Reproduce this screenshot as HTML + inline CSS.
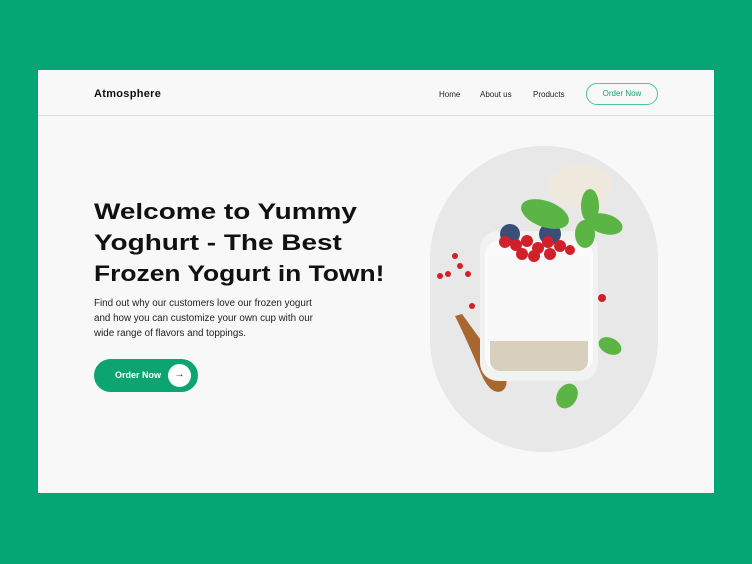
<!DOCTYPE html>
<html><head><style>
*{margin:0;padding:0;box-sizing:border-box}
body{width:752px;height:564px;background:#06a574;position:relative;font-family:"Liberation Sans",sans-serif;overflow:hidden}
.card{position:absolute;left:38px;top:70px;width:676px;height:423px;background:#f8f8f8}
.hdr{position:absolute;left:0;top:0;width:676px;height:46px;border-bottom:1px solid #dcdcdc}
.logo{position:absolute;left:56px;top:18px;font-size:11px;font-weight:bold;color:#111;letter-spacing:.3px}
.nav{position:absolute;top:20px;font-size:8px;color:#222}
.ob{position:absolute;left:548px;top:13px;width:72px;height:22px;border:1px solid #4cc39a;border-radius:11px;color:#13a372;font-size:8px;text-align:center;line-height:20px}
.h{position:absolute;left:56px;font-size:22px;font-weight:bold;color:#111;white-space:nowrap;transform-origin:left top}
.p{position:absolute;left:56px;top:226px;font-size:9.8px;line-height:15px;color:#222;white-space:nowrap}
.btn{position:absolute;left:56px;top:289px;width:104px;height:33px;border-radius:17px;background:#0ca471}
.btn span{position:absolute;left:21px;top:11px;color:#fff;font-size:9px;font-weight:bold}
.btn i{position:absolute;left:74px;top:5px;width:23px;height:23px;border-radius:50%;background:#fff;font-style:normal;text-align:center;line-height:22px;font-size:10px;color:#222}
.img{position:absolute;left:392px;top:76px;width:228px;height:306px;border-radius:114px;overflow:hidden;background:#e6e7e6}
</style></head><body>
<div class="card">
<div class="hdr">
<div class="logo">Atmosphere</div>
<div class="nav" style="left:401px">Home</div>
<div class="nav" style="left:442px">About us</div>
<div class="nav" style="left:495px">Products</div>
<div class="ob">Order Now</div>
</div>
<div class="h" style="top:129px;transform:scaleX(1.27)">Welcome to Yummy</div>
<div class="h" style="top:160px;transform:scaleX(1.27)">Yoghurt - The Best</div>
<div class="h" style="top:191px;transform:scaleX(1.2)">Frozen Yogurt in Town!</div>
<div class="p">Find out why our customers love our frozen yogurt<br>and how you can customize your own cup with our<br>wide range of flavors and toppings.</div>
<div class="btn"><span>Order Now</span><i>→</i></div>
<div class="img">
<svg width="228" height="306" viewBox="0 0 228 306">
<rect width="228" height="306" fill="#e7e8e7"/>
<ellipse cx="150" cy="40" rx="32" ry="22" fill="#efe9dd"/>
<path d="M25 170 Q35 190 50 225 Q60 250 72 245 Q82 238 70 220 Q55 200 32 168 Z" fill="#a8672f"/>
<rect x="50" y="85" width="118" height="150" rx="18" fill="#f1f3f1"/>
<rect x="55" y="95" width="108" height="130" rx="14" fill="#fbfbfb"/>
<rect x="60" y="180" width="98" height="45" rx="10" fill="#d8cfbd"/>
<rect x="58" y="110" width="102" height="85" fill="#f8f8f8"/>
<circle cx="80" cy="88" r="10" fill="#3a4e78"/><circle cx="120" cy="88" r="11" fill="#3a4e78"/>
<g fill="#d0202a"><circle cx="75" cy="96" r="6"/><circle cx="86" cy="99" r="6"/><circle cx="97" cy="95" r="6"/><circle cx="108" cy="102" r="6"/><circle cx="118" cy="96" r="6"/><circle cx="130" cy="100" r="6"/><circle cx="92" cy="108" r="6"/><circle cx="104" cy="110" r="6"/><circle cx="120" cy="108" r="6"/><circle cx="140" cy="104" r="5"/><circle cx="10" cy="130" r="3"/><circle cx="18" cy="128" r="3"/><circle cx="30" cy="120" r="3"/><circle cx="25" cy="110" r="3"/><circle cx="38" cy="128" r="3"/><circle cx="42" cy="160" r="3"/><circle cx="172" cy="152" r="4"/></g>
<g fill="#5bb544"><ellipse cx="115" cy="68" rx="25" ry="13" transform="rotate(20 115 68)"/><ellipse cx="160" cy="60" rx="9" ry="17"/><ellipse cx="175" cy="78" rx="18" ry="10" transform="rotate(15 175 78)"/><ellipse cx="155" cy="88" rx="10" ry="14"/><ellipse cx="180" cy="200" rx="12" ry="8" transform="rotate(25 180 200)"/><ellipse cx="137" cy="250" rx="10" ry="13" transform="rotate(30 137 250)"/></g>
</svg>
</div>
</div>
</body></html>
